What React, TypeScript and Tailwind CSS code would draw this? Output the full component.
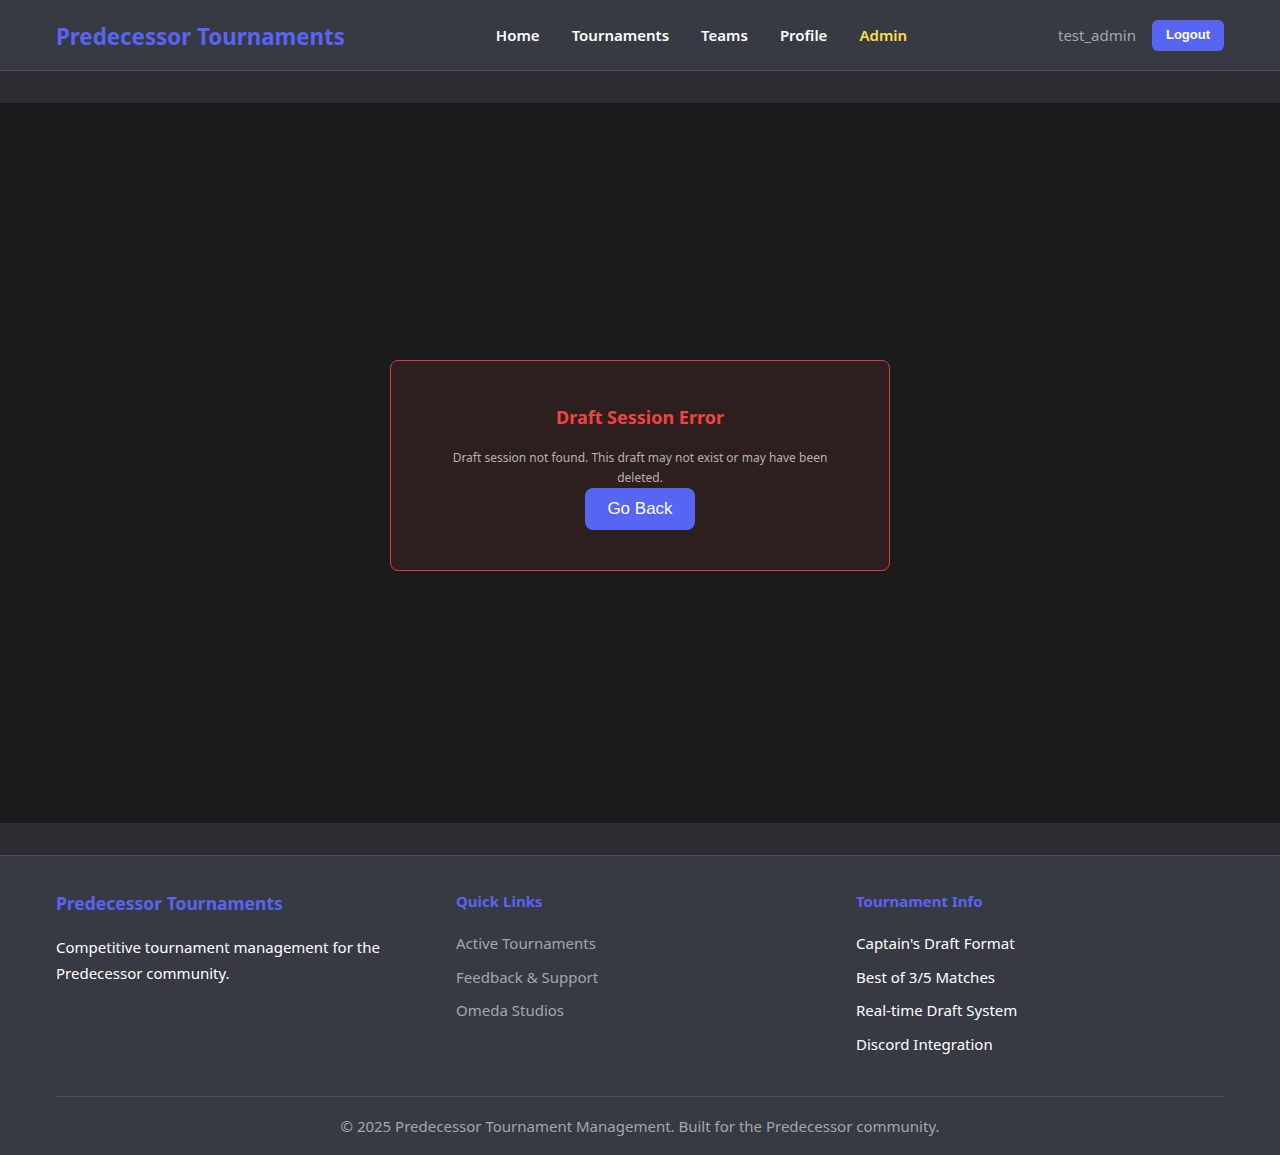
import React from "react";

const navItems = ["Home", "Tournaments", "Teams", "Profile"];

const quickLinks = ["Active Tournaments", "Feedback & Support", "Omeda Studios"];

const tournamentInfo = [
  "Captain's Draft Format",
  "Best of 3/5 Matches",
  "Real-time Draft System",
  "Discord Integration",
];

const Header: React.FC = () => (
  <header className="bg-[#373a43] border-b border-[#4e5058]">
    <div className="max-w-[1200px] mx-auto px-4 h-[70px] flex items-center justify-between">
      <span className="text-[22.3px] font-bold text-[#5865f2] leading-8 pt-[3px]">
        Predecessor Tournaments
      </span>
      <nav className="flex items-center gap-8">
        {navItems.map((item) => (
          <a key={item} className="text-[15px] font-semibold text-white">
            {item}
          </a>
        ))}
        <a className="text-[15px] font-semibold text-[#fde047]">Admin</a>
      </nav>
      <div className="flex items-center gap-4">
        <span className="text-[15px] text-[#a3a6ad]">test_admin</span>
        <button className="h-[31px] px-[14px] rounded-md bg-[#5865f2] text-white text-[13px] font-semibold font-['Liberation_Sans',Arial,sans-serif]">
          Logout
        </button>
      </div>
    </div>
  </header>
);

const ErrorCard: React.FC = () => (
  <div className="w-[500px] rounded-lg border border-[#dc3c42] bg-[#2e1f1f] px-10 pt-[42px] pb-10 text-center">
    <h2 className="text-[18px] font-bold text-[#ef4444] leading-7">
      Draft Session Error
    </h2>
    <p className="mt-[17px] text-[12px] leading-5 text-[#b3b3b3]">
      Draft session not found. This draft may not exist or may have been
      deleted.
    </p>
    <button className="h-[42px] w-[110px] rounded-lg bg-[#5865f2] text-white text-[17px] font-['Liberation_Sans',Arial,sans-serif]">
      Go Back
    </button>
  </div>
);

const Footer: React.FC = () => (
  <footer className="bg-[#373a43] border-t border-[#4e5058]">
    <div className="max-w-[1200px] mx-auto px-4 pt-[31px]">
      <div className="grid grid-cols-3 gap-8">
        <div>
          <h3 className="text-[17.5px] font-bold text-[#5865f2] leading-8">
            Predecessor Tournaments
          </h3>
          <p className="mt-[15px] text-[15px] leading-[26px] text-white">
            Competitive tournament management for the Predecessor community.
          </p>
        </div>
        <div>
          <h4 className="text-[15px] font-bold text-[#5865f2] leading-7">
            Quick Links
          </h4>
          <ul className="mt-[16px] flex flex-col gap-[8.67px]">
            {quickLinks.map((l) => (
              <li key={l} className="text-[15px] leading-[25px] text-[#a3a6ad]">
                {l}
              </li>
            ))}
          </ul>
        </div>
        <div>
          <h4 className="text-[15px] font-bold text-[#5865f2] leading-7">
            Tournament Info
          </h4>
          <ul className="mt-[16px] flex flex-col gap-[8.67px]">
            {tournamentInfo.map((l) => (
              <li key={l} className="text-[15px] leading-[25px] text-white">
                {l}
              </li>
            ))}
          </ul>
        </div>
      </div>
      <div className="mt-[39px] border-t border-[#4e5058] pt-[18px] pb-[18px] text-center text-[15px] leading-[22px] text-[#a3a6ad]">
        © 2025 Predecessor Tournament Management. Built for the Predecessor
        community.
      </div>
    </div>
  </footer>
);

export default function App() {
  return (
    <div className="min-h-screen bg-[#2c2e33] font-['Noto_Sans',sans-serif]">
      <Header />
      <div className="pt-8 pb-8">
        <main className="h-[720px] pt-[4px] bg-[#1b1b1b] flex items-center justify-center">
          <ErrorCard />
        </main>
      </div>
      <Footer />
    </div>
  );
}
